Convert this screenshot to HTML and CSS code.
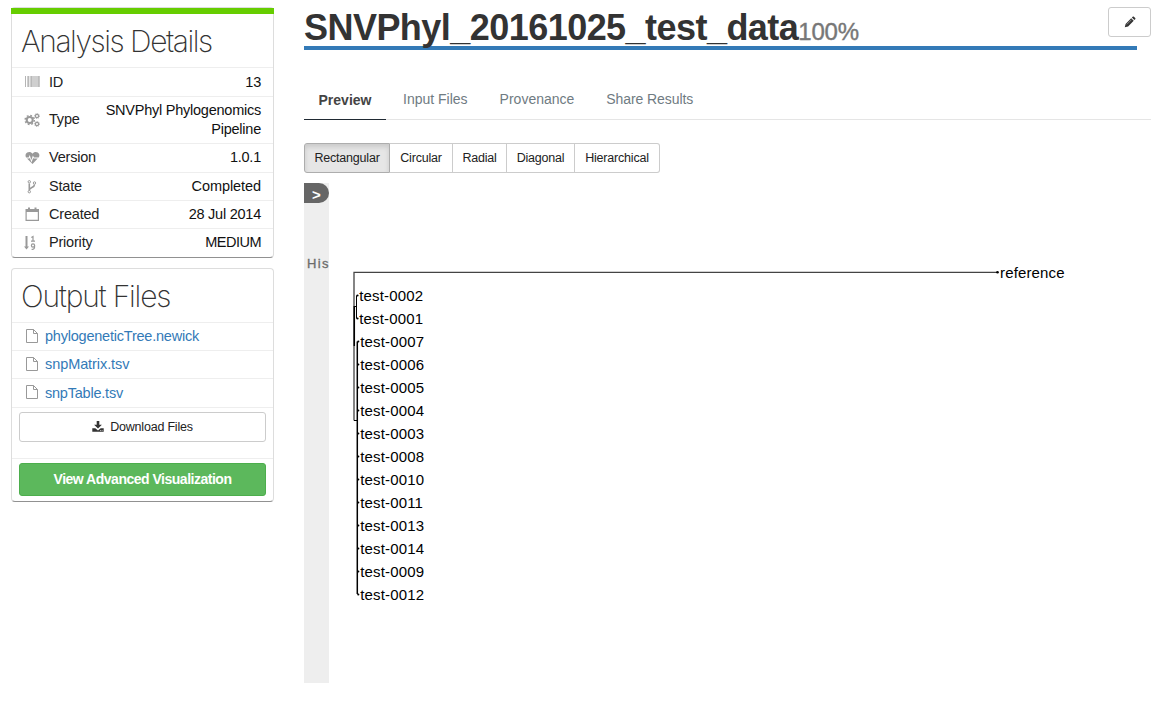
FILE: index.html
```html
<!DOCTYPE html>
<html lang="en">
<head>
<meta charset="utf-8">
<title>SNVPhyl_20161025_test_data</title>
<link rel="stylesheet" href="styles.css">
</head>
<body>
<div class="page">
  <aside class="sidebar">
    <section class="panel panel-details">
      <h2 class="panel-title title-details">Analysis Details</h2>
      <div class="row row-id"><svg class="icon" viewBox="0 0 16 16"><path fill="#cfcfcf" d="M1 2h1v11H1zM3 2h2.500v11H3zM6 2h2v11H6zM8 2h6v11H8zM14 2h1.500v11H14z"/><path fill="#aaa" d="M1 2h.7v11H1zM4 2h.6v11H4zM7 2h.6v11H7zM14.500 2h1v11h-1z"/></svg><span class="label">ID</span><span class="value">13</span></div>
      <div class="row row-type"><svg class="icon" viewBox="0 0 16 16"><circle cx="5.700" cy="8" r="3" fill="none" stroke="#999" stroke-width="2"/><circle cx="5.700" cy="8" r="4.600" fill="none" stroke="#999" stroke-width="1.400" stroke-dasharray="1.800 1.813"/><circle cx="13" cy="4" r="1.600" fill="none" stroke="#999" stroke-width="1.200"/><circle cx="13" cy="4" r="2.500" fill="none" stroke="#999" stroke-width=".8" stroke-dasharray="1 .963"/><circle cx="13" cy="12" r="1.600" fill="none" stroke="#999" stroke-width="1.200"/><circle cx="13" cy="12" r="2.500" fill="none" stroke="#999" stroke-width=".8" stroke-dasharray="1 .963"/></svg><span class="label">Type</span><span class="value">SNVPhyl Phylogenomics<br>Pipeline</span></div>
      <div class="row row-version"><svg class="icon" viewBox="0 0 16 16"><path fill="#999" d="M8.500 3.700C7 1.300 3 1.400 1.800 4c-.5 1.300-.3 2.500.3 3.500h2.600l1-2.500L7.400 10l1.500-4.500 1.100 2h4.700c.7-1 .9-2.200.4-3.500C14 1.400 10 1.300 8.500 3.700z"/><path fill="#999" d="M3 8.600h2.400l.4-.8 1.700 4.700 1.700-4.800.4.900h4.100L8.500 14z"/></svg><span class="label">Version</span><span class="value">1.0.1</span></div>
      <div class="row row-state"><svg class="icon" viewBox="0 0 16 16"><g fill="none" stroke="#999"><path stroke-width="1.600" d="M5.300 4.500v7M10.500 5.500c0 3.500-4.800 2.500-5.200 5.500"/><circle cx="5.300" cy="2.800" r="1.200"/><circle cx="5.300" cy="12.700" r="1.200"/><circle cx="10.500" cy="4" r="1.200"/></g></svg><span class="label">State</span><span class="value">Completed</span></div>
      <div class="row row-created"><svg class="icon" viewBox="0 0 16 16"><path fill="none" stroke="#999" stroke-width="1.200" d="M2.100 3.600h12.300v10.800H2.100z"/><path fill="#999" d="M2 3.500h12.500V6H2zM4 1.500h2v3H4zM10.500 1.500h2v3h-2z"/></svg><span class="label">Created</span><span class="value">28 Jul 2014</span></div>
      <div class="row row-priority"><svg class="icon" viewBox="0 0 16 16"><path fill="#999" d="M1.500 1H3.500v10.500H5L2.500 14.500 0 11.500h1.500z"/><g fill="none" stroke="#999" stroke-width="1.200"><path d="M7.300 2.500L9 1.600v4.500M7 6.200h4"/><ellipse cx="9" cy="10.500" rx="1.600" ry="1.600"/><path d="M10.600 10.500c.2 2.800-.8 4.100-3 3.900"/></g></svg><span class="label">Priority</span><span class="value value-priority">MEDIUM</span></div>
    </section>

    <section class="panel panel-files">
      <h2 class="panel-title title-files">Output Files</h2>
      <div class="row file"><svg class="icon" viewBox="0 0 16 16"><path class="page-shape" d="M2.500 1.500h7l4 4v9h-11zM9.500 1.500v4h4"/></svg><a class="link">phylogeneticTree.newick</a></div>
      <div class="row file"><svg class="icon" viewBox="0 0 16 16"><path class="page-shape" d="M2.500 1.500h7l4 4v9h-11zM9.500 1.500v4h4"/></svg><a class="link link-matrix">snpMatrix.tsv</a></div>
      <div class="row file file-last"><svg class="icon" viewBox="0 0 16 16"><path class="page-shape" d="M2.500 1.500h7l4 4v9h-11zM9.500 1.500v4h4"/></svg><a class="link">snpTable.tsv</a></div>
      <div class="action action-download"><button class="btn btn-download"><svg class="icon-download" viewBox="0 0 12 12"><path fill="#333" d="M4.700 0h2.600v3.700h2.600L6 7.500 2.100 3.700h2.600z"/><path fill="#333" d="M.3 7.200h3L6 9.500l2.700-2.300h3v3.600H.3z"/><path fill="#fff" d="M8 9.200h.8v.7H8zM9.700 9.200h.8v.7h-.8z"/></svg><span>Download Files</span></button></div>
      <div class="action action-view"><button class="btn btn-view"><span>View Advanced Visualization</span></button></div>
    </section>
  </aside>

  <main class="main">
    <header class="header">
      <h1 class="title"><span class="name">SNVPhyl_20161025_test_data</span><small class="percent">100%</small></h1>
      <button class="btn btn-edit" aria-label="Edit"><svg viewBox="0 0 12 12"><path fill="#333" d="M.8 11.200l.8-3.300L7.200 2.300l2.500 2.500-5.600 5.600zM7.900 1.600l.8-.8c.4-.4.8-.4 1.200 0l1.300 1.300c.4.400.4.800 0 1.200l-.8.800z"/><path stroke="#aaa" stroke-width=".7" d="M2.800 8.400l4.600-4.600"/></svg></button>
    </header>
    <nav class="tabs">
      <a class="tab active">Preview</a>
      <a class="tab">Input Files</a>
      <a class="tab">Provenance</a>
      <a class="tab tab-share">Share Results</a>
    </nav>
    <div class="shapes">
      <button class="shape selected">Rectangular</button><button class="shape circular">Circular</button><button class="shape radial">Radial</button><button class="shape diagonal">Diagonal</button><button class="shape hierarchical">Hierarchical</button>
    </div>
    <div class="viewer">
      <div class="drawer"><div class="handle">&gt;</div><div class="history">His</div></div>
      <svg class="tree" width="821" height="500" viewBox="329 183 821 500">
        <g fill="none" stroke="#000">
          <path stroke="#444" stroke-width="1.300" d="M354 420.500V272.300H997"/>
          <path d="M354 306.500h2.500M356.500 295.500v23M354 420.500h3.500"/>
          <path stroke-width="1.500" d="M354.300 306v40M357.300 341.500V594"/>
        </g>
        <g class="dots">
          <circle cx="997.500" cy="272.300" r="1.300"/>
          <circle cx="357.500" cy="295.500" r="1.100"/><circle cx="357.500" cy="318.500" r="1.100"/>
          <circle cx="358.300" cy="341.500" r="1.100"/><circle cx="358.300" cy="364.500" r="1.100"/><circle cx="358.300" cy="387.500" r="1.100"/><circle cx="358.300" cy="410.500" r="1.100"/><circle cx="358.300" cy="433.500" r="1.100"/><circle cx="358.300" cy="456.500" r="1.100"/><circle cx="358.300" cy="479.500" r="1.100"/><circle cx="358.300" cy="502.500" r="1.100"/><circle cx="358.300" cy="525.500" r="1.100"/><circle cx="358.300" cy="548.500" r="1.100"/><circle cx="358.300" cy="571.500" r="1.100"/><circle cx="358.300" cy="594.500" r="1.100"/>
        </g>
        <g class="leaf">
          <text x="1000" y="278">reference</text>
          <text x="359.300" y="301">test-0002</text><text x="359.300" y="324">test-0001</text>
          <text x="360.300" y="347">test-0007</text><text x="360.300" y="370">test-0006</text><text x="360.300" y="393">test-0005</text><text x="360.300" y="416">test-0004</text><text x="360.300" y="439">test-0003</text><text x="360.300" y="462">test-0008</text><text x="360.300" y="485">test-0010</text><text x="360.300" y="508">test-0011</text><text x="360.300" y="531">test-0013</text><text x="360.300" y="554">test-0014</text><text x="360.300" y="577">test-0009</text><text x="360.300" y="600">test-0012</text>
        </g>
      </svg>
    </div>
  </main>
</div>
</body>
</html>
```

FILE: styles.css
```css
* { box-sizing: border-box; }
body {
  margin: 0;
  background: #fff;
  color: #222;
  font: 14px/19px "Liberation Sans", Arial, sans-serif;
}
button { font-family: inherit; margin: 0; padding: 0; }
.page { display: flex; gap: 30px; padding: 7px 10px 0 11px; height: 707px; overflow: hidden; }
.sidebar { width: 263px; display: flex; flex-direction: column; gap: 10px; flex: none; }
.panel { border: 1px solid #ddd; border-bottom-color: #919191; border-radius: 4px; }
.panel-details { height: 251px; }
.panel-details::before { content: ""; display: block; height: 6px; margin: 0 -1px; background: #66cd00; }
.panel-title {
  margin: 0;
  padding-left: 9px;
  color: #333;
  font: 250 30px/54px Inter, sans-serif;
  height: 53px;
  white-space: nowrap;
}
.title-details { letter-spacing: -1.450px; }
.title-files { letter-spacing: -1.200px; line-height: 55px; }
.row { display: flex; align-items: center; height: 28px; border-top: 1px solid #eee; padding: 0 12px; }
.row-id, .row-version, .row-priority { height: 29px; }
.row-version, .row-priority, .row-type { padding-bottom: 1px; }
.row-type { height: 47px; }
.icon { width: 16px; height: 16px; flex: none; }
.row-created .icon, .file .icon { margin-top: -2px; }
.label { margin-left: 9px; font-size: 14.500px; letter-spacing: -.2px; }
.value { margin-left: auto; text-align: right; color: #111; font-size: 14.500px; letter-spacing: -.240px; }
.row-state .value { letter-spacing: -.080px; }
.value-priority { letter-spacing: -.5px; }
.file .icon { margin-right: 5px; }
.file-last { height: 29px; }
.page-shape { fill: none; stroke: #999; stroke-width: 1; }
.link { color: #337ab7; font-size: 14.500px; letter-spacing: -.220px; }
.link-matrix { letter-spacing: -.080px; }
.action { border-top: 1px solid #eee; padding: 4px 7px 0; }
.action-download { height: 51px; }
.action-view { height: 43px; }
.btn { display: flex; align-items: center; justify-content: center; border: 1px solid #ccc; border-radius: 3px; background: #fff; color: #333; }
.btn-download { width: 100%; height: 30px; font-size: 12.500px; gap: 6px; letter-spacing: -.2px; color: #222; }
.icon-download { width: 12px; height: 12px; }
.btn-view { width: 100%; height: 33px; padding-bottom: 2px; background: #5cb85c; border-color: #4cae4c; color: #fff; font-size: 14px; font-weight: bold; letter-spacing: -.490px; }

.main { flex: 1; min-width: 0; }
.header { display: flex; height: 43px; align-items: flex-start; }
.title { flex: none; margin: 0 -29px 0 0; width: 833px; height: 43px; border-bottom: 4px solid #337ab7; color: #333; font-size: 36px; line-height: 42px; white-space: nowrap; }
.name { letter-spacing: -.540px; }
.percent { color: #777; font-size: 24px; font-weight: normal; letter-spacing: -.2px; -webkit-text-stroke: .4px #777; }
.btn-edit { width: 43px; height: 30px; flex: none; }
.btn-edit svg { width: 12px; height: 12px; }
.tabs { display: flex; height: 40px; margin-top: 30px; border-bottom: 1px solid #e5e5e5; gap: 32px; line-height: 38px; }
.tab { color: #6f7b82; font-size: 14px; white-space: nowrap; }
.tab-share { letter-spacing: -.080px; }
.tab.active { width: 82px; height: 40px; border-bottom: 1px solid #202a33; color: #444; font-weight: bold; text-align: center; line-height: 40px; margin-right: -15px; }
.shapes { display: flex; margin-top: 23px; }
.shape { height: 30px; border: 1px solid #ccc; border-left-width: 0; background: #fff; color: #222; font-size: 12.500px; letter-spacing: -.2px; }
.shape.selected { width: 86px; border: 1px solid #adadad; border-radius: 3px 0 0 3px; background: #e6e6e6; box-shadow: inset 0 3px 5px rgba(0,0,0,.125); }
.circular { width: 63px; }
.radial { width: 54px; }
.diagonal { width: 68px; }
.hierarchical { width: 85px; border-radius: 0 3px 3px 0; }
.viewer { display: flex; margin-top: 10px; height: 500px; }
.drawer { width: 25px; background: #eee; overflow: hidden; }
.handle { width: 25px; height: 20px; border-radius: 0 10px 10px 0; background: #666; color: #fff; font-size: 15px; font-weight: bold; text-align: center; line-height: 24px; }
.history { margin-top: 51px; padding-left: 3px; color: #6b6b6b; font-size: 13px; letter-spacing: 1.300px; -webkit-text-stroke: .3px #6b6b6b; }
.tree { display: block; }
.dots circle, .leaf text { fill: #000; }
.leaf text { font-size: 15px; letter-spacing: .150px; }
```
